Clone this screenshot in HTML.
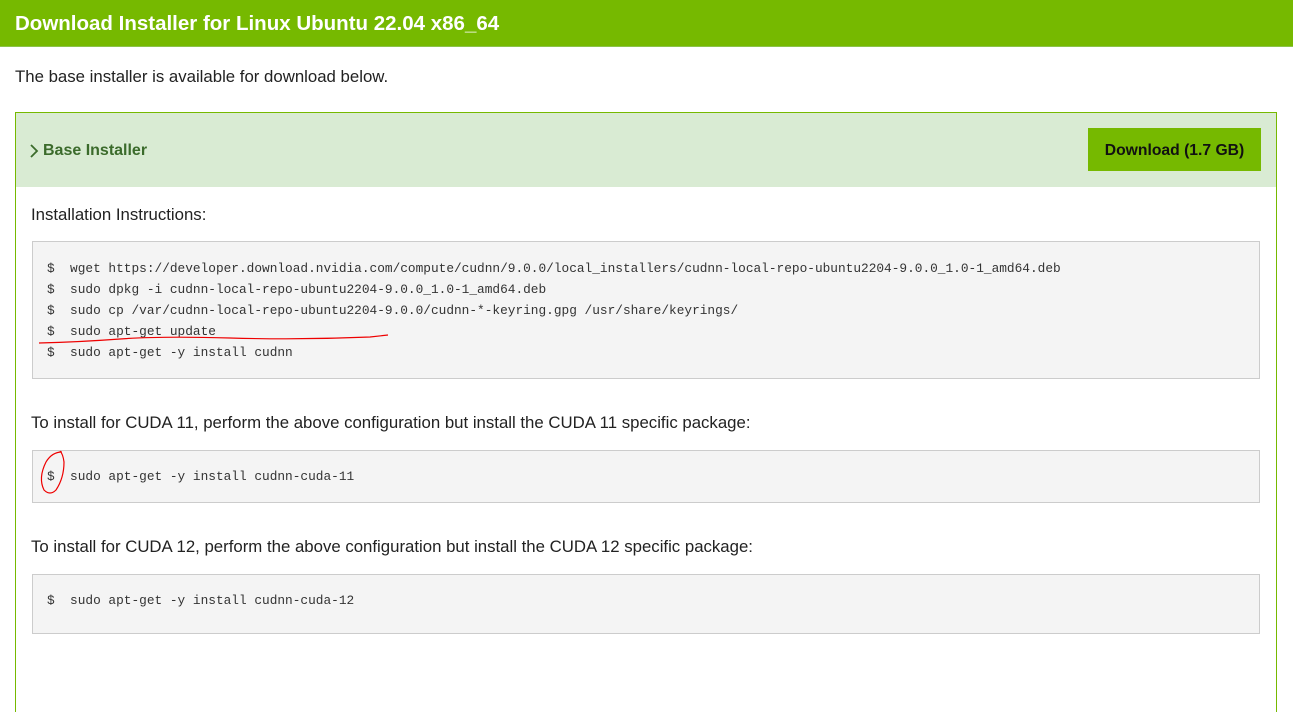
<!DOCTYPE html>
<html><head><meta charset="utf-8"><style>
*{margin:0;padding:0;box-sizing:border-box}
body{width:1293px;height:624px;overflow:hidden;background:#fff;font-family:"Liberation Sans",sans-serif;color:#1a1a1a;position:relative}
.hdr{position:absolute;left:0;top:0;width:1293px;height:47px;background:#76b900;border-bottom:1px solid #8bc34a}
.hdr span{position:absolute;left:15px;top:12px;color:#fff;font-weight:bold;font-size:20.5px}
.t{position:absolute;font-size:16.8px;color:#222}
.panel{position:absolute;left:15px;top:112px;width:1262px;height:600px;border:1px solid #76b900;border-bottom:none}
.band{position:absolute;left:0;top:0;width:1260px;height:74px;background:#d9ebd3}
.band b{position:absolute;left:27px;top:29px;font-size:16px;color:#3b6b2b}
.chev{position:absolute;left:13px;top:31px}
.btn{position:absolute;left:1072px;top:15px;width:173px;height:43px;background:#76b900;font-weight:bold;font-size:15.7px;color:#111;text-align:center;line-height:45px}
.code{position:absolute;left:32px;width:1228px;background:#f4f4f4;border:1px solid #ccc;font-family:"Liberation Mono",monospace;font-size:12.8px;color:#333}
.code div{position:absolute;left:14px;white-space:pre;line-height:21px}
</style></head><body>
<div class="hdr"><span>Download Installer for Linux Ubuntu 22.04 x86_64</span></div>
<div class="t" style="left:15px;top:67px">The base installer is available for download below.</div>
<div class="panel"><div class="band">
<svg class="chev" width="10" height="14" viewBox="0 0 10 14"><path d="M2 1 L8 7 L2 13" fill="none" stroke="#3b6b2b" stroke-width="1.8"/></svg>
<b>Base Installer</b><div class="btn">Download (1.7 GB)</div></div></div>
<div class="t" style="left:31px;top:205px">Installation Instructions:</div>
<div class="code" style="top:241px;height:138px"><div style="top:16px">$  wget https://developer.download.nvidia.com/compute/cudnn/9.0.0/local_installers/cudnn-local-repo-ubuntu2204-9.0.0_1.0-1_amd64.deb
$  sudo dpkg -i cudnn-local-repo-ubuntu2204-9.0.0_1.0-1_amd64.deb
$  sudo cp /var/cudnn-local-repo-ubuntu2204-9.0.0/cudnn-*-keyring.gpg /usr/share/keyrings/
$  sudo apt-get update
$  sudo apt-get -y install cudnn</div></div>
<div class="t" style="left:31px;top:413px">To install for CUDA 11, perform the above configuration but install the CUDA 11 specific package:</div>
<div class="code" style="top:450px;height:53px"><div style="top:15px">$  sudo apt-get -y install cudnn-cuda-11</div></div>
<div class="t" style="left:31px;top:537px">To install for CUDA 12, perform the above configuration but install the CUDA 12 specific package:</div>
<div class="code" style="top:574px;height:60px"><div style="top:15px">$  sudo apt-get -y install cudnn-cuda-12</div></div>
<svg style="position:absolute;left:0;top:0" width="1293" height="624">
<path d="M39 343 Q80 342 120 339 T230 338 Q300 340 370 337 L388 335" fill="none" stroke="#e00" stroke-width="1.2"/>
<path d="M62 452 Q52 452 46 462 Q38 478 44 490 Q50 496 56 490 Q64 478 64 462 Q63 454 60 451" fill="none" stroke="#e00" stroke-width="1.2"/>
</svg>
</body></html>
